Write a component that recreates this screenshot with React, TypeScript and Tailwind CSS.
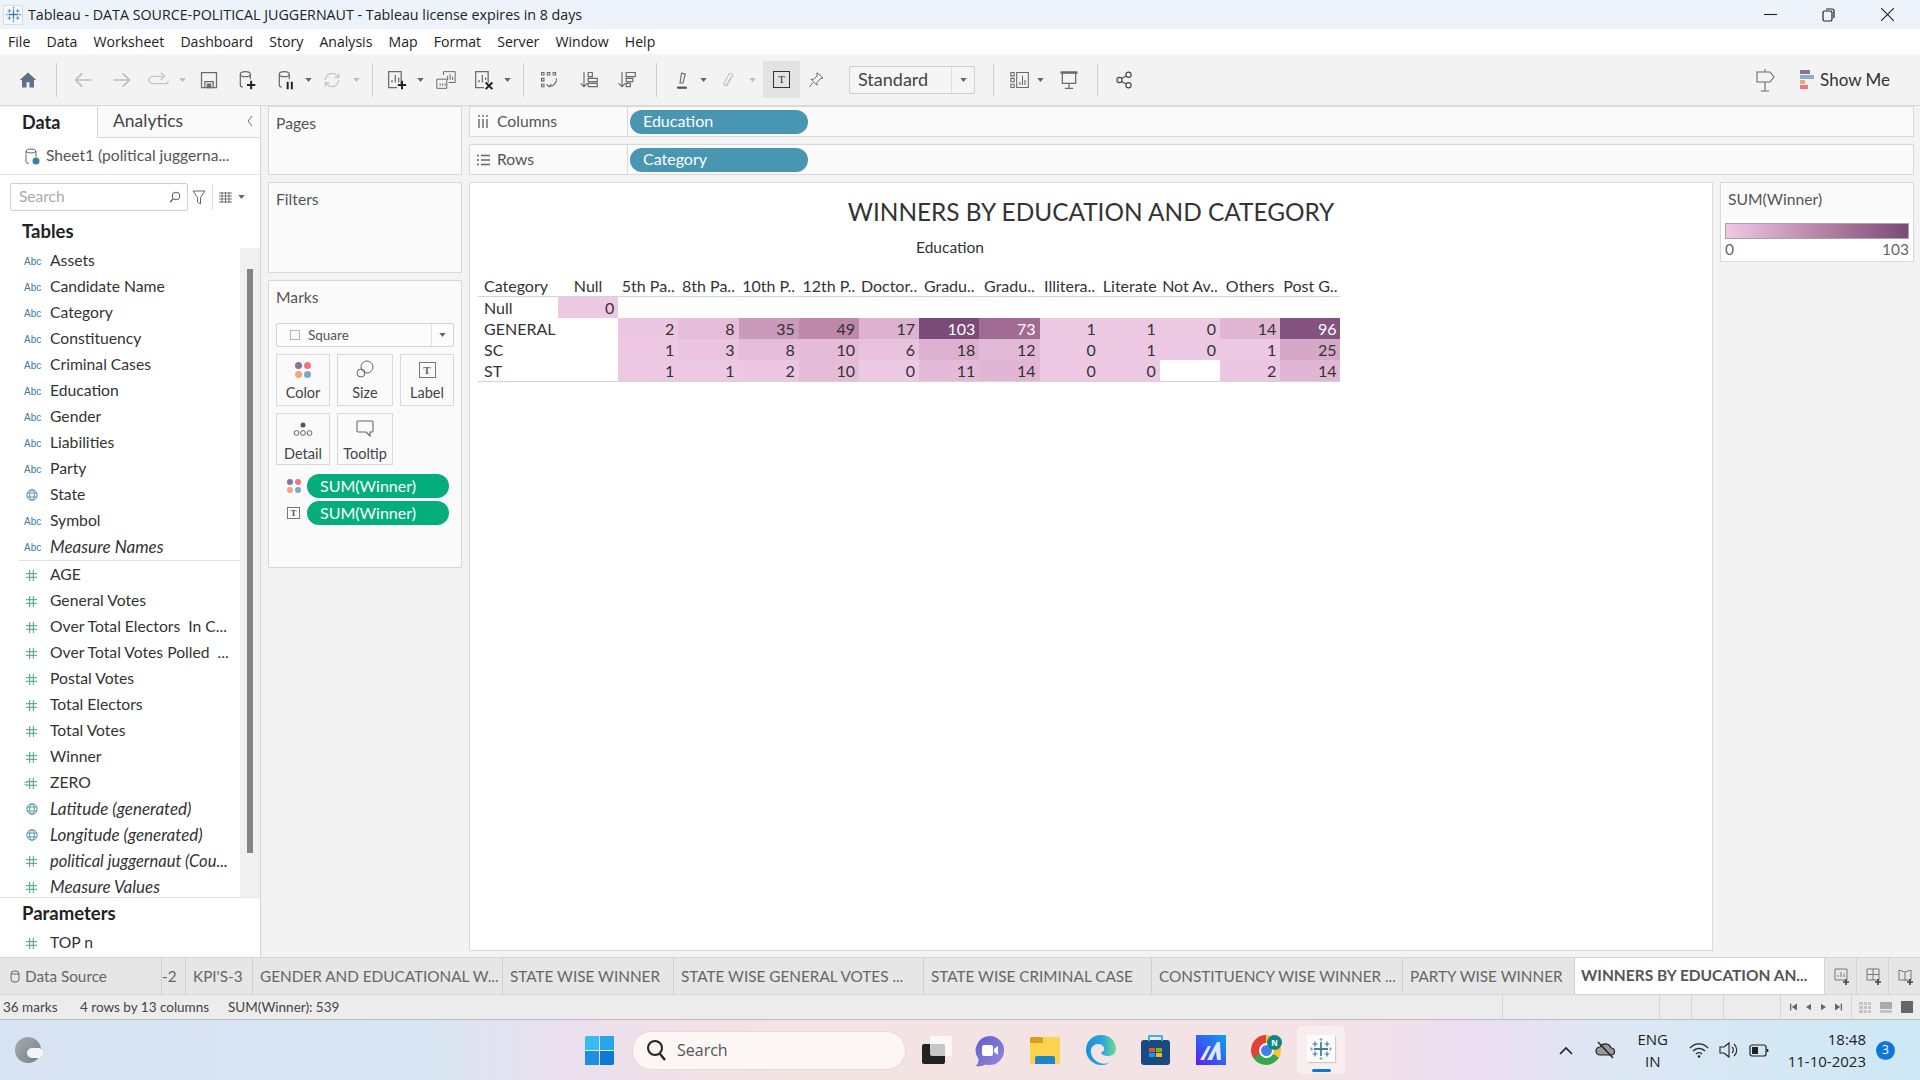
import type { ReactNode } from 'react';

// Tableau Desktop, feuille "WINNERS BY EDUCATION AND CATEGORY", avec la barre des tâches Windows 11.

const dims = ['Assets', 'Candidate Name', 'Category', 'Constituency', 'Criminal Cases', 'Education', 'Gender', 'Liabilities', 'Party', 'State', 'Symbol', 'Measure Names'];
const measures = ['AGE', 'General Votes', 'Over Total Electors  In C...', 'Over Total Votes Polled  ...', 'Postal Votes', 'Total Electors', 'Total Votes', 'Winner', 'ZERO', 'Latitude (generated)', 'Longitude (generated)', 'political juggernaut (Cou...', 'Measure Values'];
const italics = ['Measure Names', 'Latitude (generated)', 'Longitude (generated)', 'Measure Values'];
const columns = ['Null', '5th Pa..', '8th Pa..', '10th P..', '12th P..', 'Doctor..', 'Gradu..', 'Gradu..', 'Illitera..', 'Literate', 'Not Av..', 'Others', 'Post G..'];
const rows: { name: string; values: (number | null)[] }[] = [
  { name: 'Null', values: [0, null, null, null, null, null, null, null, null, null, null, null, null] },
  { name: 'GENERAL', values: [null, 2, 8, 35, 49, 17, 103, 73, 1, 1, 0, 14, 96] },
  { name: 'SC', values: [null, 1, 3, 8, 10, 6, 18, 12, 0, 1, 0, 1, 25] },
  { name: 'ST', values: [null, 1, 1, 2, 10, 0, 11, 14, 0, 0, null, 2, 14] },
];
const tabs = [
  { label: '-2', w: 'w-[24px]', pad: 'pl-0' },
  { label: "KPI'S-3", w: 'w-[67px]', pad: 'pl-[7px]' },
  { label: 'GENDER AND EDUCATIONAL W...', w: 'w-[250px]', pad: 'pl-[7px]' },
  { label: 'STATE WISE WINNER', w: 'w-[171px]', pad: 'pl-[7px]' },
  { label: 'STATE WISE GENERAL VOTES ...', w: 'w-[250px]', pad: 'pl-[7px]' },
  { label: 'STATE WISE CRIMINAL CASE', w: 'w-[228px]', pad: 'pl-[7px]' },
  { label: 'CONSTITUENCY WISE WINNER ...', w: 'w-[251px]', pad: 'pl-[7px]' },
  { label: 'PARTY WISE WINNER', w: 'w-[172px]', pad: 'pl-[7px]' },
];

// 0 -> #eec9e4, 51 -> #bb85a8, 103 -> #7a4a78
function heat(v: number) {
  const a = [238, 201, 228];
  const b = [187, 133, 168];
  const c = [122, 74, 120];
  const t = v <= 51 ? v / 51 : (v - 51) / 52;
  const from = v <= 51 ? a : b;
  const to = v <= 51 ? b : c;
  return `rgb(${from.map((f, i) => Math.round(f + (to[i] - f) * t)).join(',')})`;
}

function Ico({ className, children, vb = '0 0 24 24' }: { className: string; children: ReactNode; vb?: string }) {
  return (
    <svg viewBox={vb} fill="none" stroke="currentColor" strokeWidth="1.5" className={`shrink-0 ${className}`}>
      {children}
    </svg>
  );
}

const Caret = ({ ml, light }: { ml: string; light?: boolean }) => (
  <svg viewBox="0 0 8 5" className={`w-[7px] h-[4px] shrink-0 ${ml} ${light ? 'text-[#bdbdbd]' : 'text-[#666]'}`}>
    <path d="M0 0h8L4 5z" fill="currentColor" />
  </svg>
);

const Sep = ({ ml }: { ml: string }) => <div className={`w-px h-[34px] bg-[#cfcfcf] shrink-0 ${ml}`} />;

function TableauMark({ className }: { className: string }) {
  return (
    <svg viewBox="0 0 24 24" className={className} stroke="#3f7fa6" strokeWidth="1.2">
      <path d="M12 5v14M5 12h14" strokeWidth="1.8" />
      <path d="M12 1v3M10.5 2.5h3M12 20v3M10.5 21.5h3M1 12h3M2.5 10.5v3M20 12h3M21.5 10.5v3" stroke="#7fa6c4" />
      <path d="M6 4.5v5M3.5 7h5M18 4.5v5M15.5 7h5M6 14.5v5M3.5 17h5M18 14.5v5M15.5 17h5" />
    </svg>
  );
}

function FieldIcon({ kind }: { kind: 'abc' | 'geo' | 'num' | 'calc' }) {
  if (kind === 'abc') return <span className="w-[32px] pl-[6px] text-[10px] text-[#3e7c9b] font-['Liberation_Sans',sans-serif] shrink-0">Abc</span>;
  if (kind === 'geo') {
    return (
      <span className="w-[32px] pl-[8px] shrink-0 text-[#3f8fa0]">
        <Ico className="w-[12px] h-[12px]" vb="0 0 12 12">
          <g strokeWidth="0.9">
            <circle cx="6" cy="6" r="5.2" />
            <ellipse cx="6" cy="6" rx="2.3" ry="5.2" />
            <path d="M1 4h10M1 8h10" />
          </g>
        </Ico>
      </span>
    );
  }
  return (
    <span className="w-[32px] pl-[8px] shrink-0 relative text-[#46a07c]">
      {kind === 'calc' && <span className="absolute left-[5px] top-[-2px] text-[9px] leading-[16px]">=</span>}
      <Ico className="w-[11px] h-[11px]" vb="0 0 11 11">
        <path d="M3.7 0v11M7.3 0v11M0 3.7h11M0 7.3h11" strokeWidth="1" />
      </Ico>
    </span>
  );
}

function Field({ name, kind }: { name: string; kind: 'abc' | 'geo' | 'num' | 'calc' }) {
  const wide = name.startsWith('political');
  return (
    <div className="h-[26px] flex items-center pl-[18px] whitespace-pre">
      <FieldIcon kind={kind} />
      <span className={wide ? 'italic text-[16.5px]' : italics.includes(name) ? 'italic text-[17px]' : ''}>{name}</span>
    </div>
  );
}

function Toolbar() {
  return (
    <div className="h-[51px] bg-[#f3f3f3] flex items-center text-[#6b6b6b] shrink-0">
      <Ico className="w-[18px] h-[18px] ml-[19px] text-[#5f7289]">
        <path d="M12 2 1 12h3v10h6v-7h4v7h6V12h3z" fill="currentColor" stroke="none" />
      </Ico>
      <Sep ml="ml-[19px]" />
      <Ico className="w-[20px] h-[20px] ml-[16px] text-[#bdbdbd]"><path d="M22 12H3M11 4l-8 8 8 8" strokeWidth="2" /></Ico>
      <Ico className="w-[20px] h-[20px] ml-[19px] text-[#bdbdbd]"><path d="M2 12h19M13 4l8 8-8 8" strokeWidth="2" /></Ico>
      <Ico className="w-[22px] h-[22px] ml-[16px] text-[#c4c4c4]"><path d="M16 8H5a3 3 0 0 0 0 8h14a3 3 0 0 0 3-3M14 4l4 4-4 4" /></Ico>
      <Caret ml="ml-[9px]" light />
      <Ico className="w-[20px] h-[20px] ml-[13px]"><path d="M3 3h18v18H3zM7 21v-7h10v7" /><path d="M10 17h4v4h-4z" fill="currentColor" /></Ico>
      <Ico className="w-[20px] h-[20px] ml-[18px]">
        <ellipse cx="10" cy="5" rx="6" ry="3" />
        <path d="M4 5v13a2 2 0 0 0 3 2M16 5v6" />
        <path d="M17 13v10M12 18h10" stroke="#222" strokeWidth="2.4" />
      </Ico>
      <Ico className="w-[20px] h-[20px] ml-[19px]">
        <ellipse cx="10" cy="5" rx="6" ry="3" />
        <path d="M4 5v13a2 2 0 0 0 3 2M16 5v6" />
        <path d="M14 14v9M19 14v9" stroke="#222" strokeWidth="2.4" />
      </Ico>
      <Caret ml="ml-[9px]" />
      <Ico className="w-[20px] h-[20px] ml-[10px] text-[#c4c4c4]"><path d="M4 12a8 8 0 0 1 14-5l2 2M20 12a8 8 0 0 1-14 5l-2-2M20 4v5h-5M4 20v-5h5" /></Ico>
      <Caret ml="ml-[11px]" light />
      <Sep ml="ml-[12px]" />
      <Ico className="w-[20px] h-[20px] ml-[14px]">
        <path d="M17 18V2H2v19h10M6 15v-3M10 15V6M14 15v-6" />
        <path d="M18 13v10M13 18h10" stroke="#222" strokeWidth="2.4" />
      </Ico>
      <Caret ml="ml-[10px]" />
      <Ico className="w-[20px] h-[20px] ml-[12px]">
        <path d="M9 6V2h14v13h-8M1 11h12v11H1zM5 19v-3M8 19v-3M11 19v-3M14 12V7M17 12V5M20 12V8" strokeWidth="1.2" />
      </Ico>
      <Ico className="w-[20px] h-[20px] ml-[18px]">
        <path d="M17 15V2H2v19h10M6 15v-3M10 15V6M14 12V9" />
        <path d="m14 15 8 8M22 15l-8 8" stroke="#222" strokeWidth="2.4" />
      </Ico>
      <Caret ml="ml-[10px]" />
      <Sep ml="ml-[12px]" />
      <Ico className="w-[20px] h-[20px] ml-[15px]">
        <path d="M3 3h3v3H3zM10 3h3v3h-3zM17 3h3v3h-3zM3 10h3v3H3zM3 17h3v3H3zM21 10a9 9 0 0 1-9 10M9 17l3 3 3-3" strokeWidth="1.3" />
      </Ico>
      <Ico className="w-[20px] h-[20px] ml-[20px]">
        <path d="M6 2v18M2 16l4 4 4-4M11 3h5v5h-5zM11 10h11v4H11zM11 16h11v4H11z" strokeWidth="1.4" />
      </Ico>
      <Ico className="w-[20px] h-[20px] ml-[18px]">
        <path d="M6 2v18M2 16l4 4 4-4M11 3h11v5H11zM11 10h8v4h-8zM11 16h5v4h-5z" strokeWidth="1.4" />
      </Ico>
      <Sep ml="ml-[19px]" />
      <Ico className="w-[18px] h-[18px] ml-[17px]">
        <path d="m8 16 2-13 5 1-3 12zM5 23h12" />
        <path d="M4 22h13" stroke="#555" strokeWidth="2.5" />
      </Ico>
      <Caret ml="ml-[8px]" />
      <Ico className="w-[18px] h-[18px] ml-[13px] text-[#c4c4c4]"><path d="m9 20 8-14a3 3 0 0 0-5-2L5 17a2 2 0 0 0 3 2l7-11" /></Ico>
      <Caret ml="ml-[11px]" light />
      <div className="w-[37px] h-[37px] ml-[7px] bg-[#e3e3e3] flex items-center justify-center shrink-0">
        <div className="w-[17px] h-[17px] border border-[#333] flex items-center justify-center text-[11px] leading-none text-[#333] font-['Liberation_Serif',serif]">T</div>
      </div>
      <Ico className="w-[16px] h-[16px] ml-[9px]"><path d="m13 1 9 8-4 1-5 6 0 4-9-9 4 0 5-5zM7 16l-6 7" transform="translate(-1 0)" /></Ico>
      <div className="ml-[24px] w-[126px] h-[28px] shrink-0 flex border border-[#cfcfcf] rounded-[2px] bg-[#f5f5f5] font-[Lato,sans-serif] text-[18px] text-[#444]">
        <div className="flex-1 flex items-center pl-[8px] border-r border-[#dedede]">Standard</div>
        <div className="w-[22px] flex items-center justify-center"><Caret ml="" /></div>
      </div>
      <Sep ml="ml-[18px]" />
      <Ico className="w-[20px] h-[20px] ml-[16px]">
        <path d="M1 3h4v4H1zM1 10h4v4H1zM1 17h4v4H1zM8 3h14v18H8zM12 18v-4M15 18V7M18 18v-6" strokeWidth="1.3" />
      </Ico>
      <Caret ml="ml-[7px]" />
      <Ico className="w-[20px] h-[20px] ml-[15px]">
        <path d="M2 3h20M4 3v13h16V3M12 16v6M7 22h10" />
        <path d="M2 3h20" strokeWidth="3" />
      </Ico>
      <Sep ml="ml-[18px]" />
      <Ico className="w-[18px] h-[18px] ml-[17px] text-[#444]">
        <circle cx="6" cy="12" r="3.5" />
        <circle cx="18" cy="5" r="3.5" />
        <circle cx="18" cy="19" r="3.5" />
        <path d="m9 10 6-3.5M9 14l6 3.5" />
      </Ico>
      <div className="ml-auto flex items-center pr-[30px]">
        <Ico className="w-[20px] h-[24px]" vb="0 0 20 24">
          <path d="M10 1v3M2 4h13l4 5-4 5H2zM10 14v9M6 23h8" strokeWidth="1.1" />
        </Ico>
        <div className="ml-[25px] w-[14px] flex flex-col gap-px">
          <div className="h-[4px] w-[10px] bg-[#8a7299]" />
          <div className="h-[4px] w-[14px] bg-[#8aaccf]" />
          <div className="h-[4px] w-[5px] bg-[#f0a878]" />
          <div className="h-[4px] w-[8px] bg-[#f2747f]" />
        </div>
        <span className="ml-[6px] text-[17px] text-[#333] font-[Lato,sans-serif]">Show Me</span>
      </div>
    </div>
  );
}

function LeftPanel() {
  return (
    <div className="w-[261px] shrink-0 bg-white border-r border-[#d4d4d4] flex flex-col font-[Lato,sans-serif] text-[15.7px] text-[#333] overflow-hidden">
      <div className="h-[32px] flex shrink-0">
        <div className="w-[98px] flex items-center pl-[22px] font-bold text-[18px] text-[#222] border-r border-[#d4d4d4] border-t border-t-[#f0f0f0]">Data</div>
        <div className="flex-1 flex items-center pl-[15px] text-[17.5px] text-[#444] bg-[#fafafa] border-b border-[#d4d4d4] relative">
          Analytics
          <svg viewBox="0 0 6 10" className="absolute right-[7px] top-[10px] w-[6px] h-[10px] text-[#666]" fill="none" stroke="currentColor"><path d="M5 0 1 5l4 5" /></svg>
        </div>
      </div>
      <div className="h-[37px] flex items-center pl-[25px] border-b border-[#e6e6e6] text-[15.6px] text-[#555] shrink-0">
        <Ico className="w-[15px] h-[17px] mr-[6px] text-[#666]" vb="0 0 15 17">
          <ellipse cx="6" cy="3" rx="5" ry="2" strokeWidth="1" />
          <path d="M1 3v11a2 2 0 0 0 3 1M11 3v6" strokeWidth="1" />
          <circle cx="11" cy="13" r="3.5" fill="#3e7fa8" stroke="none" />
        </Ico>
        Sheet1 (political juggerna...
      </div>
      <div className="h-[40px] flex items-start pt-[8px] pl-[10px] shrink-0">
        <div className="w-[178px] h-[28px] border border-[#cfcfcf] rounded-[2px] flex items-center pl-[8px] pr-[6px] text-[#aaa] text-[15.5px]">
          <span className="flex-1">Search</span>
          <Ico className="w-[12px] h-[12px] text-[#555]" vb="0 0 12 12"><circle cx="7" cy="5" r="3.8" strokeWidth="1" /><path d="m4 8-3 3" strokeWidth="1.2" /></Ico>
        </div>
        <Ico className="w-[14px] h-[15px] ml-[4px] mt-[7px] text-[#666]" vb="0 0 14 15"><path d="M1 1h12L8.5 7.5V14l-3-2V7.500z" strokeWidth="1" /></Ico>
        <div className="w-px h-[26px] bg-[#ddd] ml-[6px] mt-[1px]" />
        <Ico className="w-[13px] h-[11px] ml-[6px] mt-[9px] text-[#666]" vb="0 0 13 11"><path d="M0 1h13M0 4h13M0 7h13M0 10h13M3 0v11M6.500 0v11M10 0v11" strokeWidth="0.9" /></Ico>
        <Caret ml="ml-[6px] mt-[12px]" />
      </div>
      <div className="h-[33px] flex items-center pl-[22px] font-bold text-[18.5px] text-[#222] shrink-0">Tables</div>
      <div className="h-[649px] flex overflow-hidden shrink-0">
        <div className="flex-1 min-w-0">
          <div className="border-b border-[#e2e2e2] ml-[18px] mb-px">
            <div className="-ml-[18px]">
              {dims.map((d) => (
                <Field key={d} name={d} kind={d === 'State' ? 'geo' : 'abc'} />
              ))}
            </div>
          </div>
          {measures.map((m) => (
            <Field key={m} name={m} kind={m.includes('generated') ? 'geo' : m === 'ZERO' ? 'calc' : 'num'} />
          ))}
        </div>
        <div className="w-[20px] bg-[#f0f0f0] shrink-0 pl-[7px] pt-[21px]">
          <div className="w-[6px] h-[584px] bg-[#858585]" />
        </div>
      </div>
      <div className="border-t border-[#e6e6e6] h-[33px] flex items-center pl-[22px] font-bold text-[18.5px] text-[#222] shrink-0">Parameters</div>
      <Field name="TOP n" kind="num" />
    </div>
  );
}

function MarkButton({ label, w, tight, children }: { label: string; w: string; tight?: boolean; children: ReactNode }) {
  return (
    <div className={`${w} h-[52px] border border-[#d9d9d9] flex flex-col items-center justify-end text-[#444] text-[14.5px] ${tight ? 'pb-[2px] gap-[9px]' : 'pb-[4px] gap-[7px]'}`}>
      {children}
      <span className="leading-[16px]">{label}</span>
    </div>
  );
}

const ColorDots = ({ size }: { size: string }) => (
  <div className={`${size} grid grid-cols-2 gap-[2px] shrink-0`}>
    <div className="rounded-full bg-[#8a7299]" />
    <div className="rounded-full bg-[#f2747f]" />
    <div className="rounded-full bg-[#f0a878]" />
    <div className="rounded-full bg-[#7fa6cc]" />
  </div>
);

function MarkPill({ children }: { children: ReactNode }) {
  return (
    <div className="flex items-center h-[24px] pl-[18px] shrink-0">
      <div className="w-[20px] flex justify-start shrink-0">{children}</div>
      <div className="w-[142px] h-[24px] rounded-full bg-[#03ae7c] text-white text-[16px] flex items-center pl-[13px]">SUM(Winner)</div>
    </div>
  );
}

function MiddlePanel() {
  return (
    <div className="w-[194px] ml-[7px] shrink-0 flex flex-col gap-[7px] font-[Lato,sans-serif] text-[#555]">
      <div className="h-[69px] bg-[#fafafa] border border-[#d9d9d9] pl-[7px] pt-[5px] text-[15.7px]">Pages</div>
      <div className="h-[91px] bg-[#fafafa] border border-[#d9d9d9] pl-[7px] pt-[5px] text-[15.7px]">Filters</div>
      <div className="h-[288px] bg-[#fafafa] border border-[#d9d9d9] pt-[5px] text-[15.7px]">
        <div className="pl-[7px] h-[37px]">Marks</div>
        <div className="ml-[7px] w-[178px] h-[24px] border border-[#d4d4d4] rounded-[2px] flex items-center text-[13.5px] bg-[#fcfcfc]">
          <div className="w-[10px] h-[10px] border border-[#b5b5b5] ml-[13px] mr-[8px]" />
          <span className="flex-1">Square</span>
          <div className="w-[22px] h-full border-l border-[#e2e2e2] flex items-center justify-center"><Caret ml="" /></div>
        </div>
        <div className="flex gap-[7px] ml-[7px] mt-[7px]">
          <MarkButton label="Color" w="w-[54px]"><ColorDots size="w-[16px] h-[16px]" /></MarkButton>
          <MarkButton label="Size" w="w-[56px]">
            <Ico className="w-[18px] h-[18px] text-[#666]" vb="0 0 18 18"><circle cx="11" cy="7" r="6" strokeWidth="1" /><circle cx="5" cy="13" r="4" strokeWidth="1" /></Ico>
          </MarkButton>
          <MarkButton label="Label" w="w-[54px]">
            <div className="w-[17px] h-[16px] border border-[#777] flex items-center justify-center text-[11px] leading-none font-bold font-['Liberation_Serif',serif] text-[#666]">T</div>
          </MarkButton>
        </div>
        <div className="flex gap-[7px] ml-[7px] mt-[7px]">
          <MarkButton label="Detail" w="w-[54px]" tight>
            <Ico className="w-[20px] h-[15px] text-[#666]" vb="0 0 20 15">
              <circle cx="10" cy="3" r="2.500" fill="#555" stroke="none" />
              <circle cx="3.500" cy="11" r="2.400" strokeWidth="1" />
              <circle cx="10" cy="11" r="2.400" strokeWidth="1" />
              <circle cx="16.500" cy="11" r="2.400" strokeWidth="1" />
            </Ico>
          </MarkButton>
          <MarkButton label="Tooltip" w="w-[56px]" tight>
            <Ico className="w-[18px] h-[17px] text-[#666]" vb="0 0 18 17"><path d="M2 1h14a1 1 0 0 1 1 1v9a1 1 0 0 1-1 1h-2v4l-4-4H2a1 1 0 0 1-1-1V2a1 1 0 0 1 1-1z" strokeWidth="1.1" /></Ico>
          </MarkButton>
        </div>
        <div className="mt-[9px] flex flex-col gap-[3px]">
          <MarkPill><ColorDots size="w-[14px] h-[14px]" /></MarkPill>
          <MarkPill>
            <div className="w-[13px] h-[12px] border border-[#777] flex items-center justify-center text-[9px] leading-none font-['Liberation_Serif',serif] font-bold">T</div>
          </MarkPill>
        </div>
      </div>
    </div>
  );
}

function Shelf({ label, icon, pill }: { label: string; icon: ReactNode; pill: string }) {
  return (
    <div className="h-[31px] bg-[#fafafa] border border-[#d9d9d9] flex items-center">
      <div className="w-[158px] h-full border-r border-[#d9d9d9] flex items-center pl-[7px] shrink-0 text-[15.7px] text-[#555]">
        <div className="w-[14px] mr-[6px] flex items-center">{icon}</div>
        {label}
      </div>
      <div className="ml-[2px] w-[178px] h-[24px] rounded-full bg-[#4996b2] text-white text-[16px] flex items-center pl-[13px] pb-px">{pill}</div>
    </div>
  );
}

function Viz() {
  return (
    <div className="h-[769px] bg-white border border-[#d9d9d9] pt-[14px] font-[Lato,sans-serif] text-[#333] text-[16px]">
      <div className="text-center text-[24.4px] leading-[30px] text-[#333]">WINNERS BY EDUCATION AND CATEGORY</div>
      <div className="mt-[8px] h-[24px] leading-[24px] w-[960px] text-center text-[15.5px]">Education</div>
      <div className="mt-[17px] ml-[8px] w-[862px]">
        <div className="grid grid-cols-[80px_repeat(13,60.2px)] h-[20px] border-b border-[#d4d4d4] box-content leading-[20px] whitespace-nowrap">
          <div className="pl-[6px]">Category</div>
          {columns.map((c, i) => (
            <div key={i} className="text-center">{c}</div>
          ))}
        </div>
        <div className="border-b border-[#d4d4d4]">
          {rows.map((r) => (
            <div key={r.name} className="grid grid-cols-[80px_repeat(13,60.2px)] h-[21px] leading-[21px]">
              <div className="pl-[6px]">{r.name}</div>
              {r.values.map((v, i) =>
                v === null ? (
                  <div key={i} />
                ) : (
                  <div key={i} className={`text-right pr-[4px] ${v > 60 ? 'text-white' : ''}`} style={{ backgroundColor: heat(v) }}>
                    {v}
                  </div>
                ),
              )}
            </div>
          ))}
        </div>
      </div>
    </div>
  );
}

function Legend() {
  return (
    <div className="w-[194px] ml-[7px] shrink-0 h-[80px] bg-[#fafafa] border border-[#d9d9d9] font-[Lato,sans-serif] text-[#555] self-start">
      <div className="h-[36px] pl-[7px] leading-[32px] text-[15.7px]">SUM(Winner)</div>
      <div className="bg-white h-[42px] px-[4px] pt-[4px]">
        <div className="h-[16px] border border-[#aaa3a3] bg-[linear-gradient(90deg,#eec9e4,#bb85a8_50%,#7a4a78)]" />
        <div className="flex justify-between text-[15.5px] text-[#666] leading-[20px]"><span>0</span><span>103</span></div>
      </div>
    </div>
  );
}

function TabBar() {
  return (
    <div className="h-[38px] bg-[#e6e6e6] border-y border-[#d4d4d4] flex text-[#666] font-[Lato,sans-serif] text-[15.3px] whitespace-nowrap shrink-0">
      <div className="w-[162px] flex items-center pl-[10px] border-r border-[#cfcfcf] shrink-0">
        <Ico className="w-[10px] h-[13px] mr-[5px]" vb="0 0 10 13"><rect x="1" y="1" width="8" height="11" rx="3" strokeWidth="1" /><path d="M1 4h8" strokeWidth="1" /></Ico>
        Data Source
      </div>
      {tabs.map((t) => (
        <div key={t.label} className={`${t.w} ${t.pad} flex items-center border-r border-[#cfcfcf] overflow-hidden shrink-0`}>{t.label}</div>
      ))}
      <div className="w-[249px] bg-white flex items-center pl-[6px] font-bold text-[15.5px] text-[#555] shrink-0">WINNERS BY EDUCATION AN...</div>
      {['M3 2h12v11H3zM6 10V8M9 10V5M12 10V7', 'M3 2h12v11H3zM9 2v11M3 7.500h12', 'M3 3l6 2 6-2v10H3zM9 5v9'].map((d) => (
        <div key={d} className="w-[32px] flex items-center justify-center border-l border-[#d4d4d4] text-[#777] shrink-0">
          <Ico className="w-[18px] h-[18px]" vb="0 0 18 18">
            <path d={d} strokeWidth="1" />
            <path d="M14 12v6M11 15h6" stroke="#444" strokeWidth="1.6" />
          </Ico>
        </div>
      ))}
    </div>
  );
}

function StatusBar() {
  return (
    <div className="h-[25px] bg-[#ececec] border-b border-[#bdbdbd] flex items-center text-[#444] font-[Lato,sans-serif] text-[13.5px] shrink-0">
      <span className="pl-[3px] w-[80px]">36 marks</span>
      <span className="w-[148px]">4 rows by 13 columns</span>
      <span>SUM(Winner): 539</span>
      <div className="ml-auto w-[418px] h-full flex shrink-0">
        <div className="w-[157px] border-l border-[#d4d4d4]" />
        <div className="w-[32px] border-l border-[#d4d4d4]" />
        <div className="w-[32px] border-l border-[#d4d4d4]" />
        <div className="w-[57px] border-l border-[#d4d4d4]" />
        <div className="w-[71px] border-l border-[#d4d4d4] flex items-center justify-around px-[4px] text-[#666]">
          <svg viewBox="0 0 8 8" className="w-[7px] h-[8px]"><path d="M0 0h1.500v8H0zM8 0v8L2 4z" fill="currentColor" /></svg>
          <svg viewBox="0 0 6 8" className="w-[5px] h-[8px]"><path d="M6 0v8L0 4z" fill="currentColor" /></svg>
          <svg viewBox="0 0 6 8" className="w-[5px] h-[8px]"><path d="M0 0v8l6-4z" fill="currentColor" /></svg>
          <svg viewBox="0 0 8 8" className="w-[7px] h-[8px]"><path d="M8 0H6.500v8H8zM0 0v8l6-4z" fill="currentColor" /></svg>
        </div>
        <div className="flex-1 border-l border-[#d4d4d4] flex items-center justify-around px-[3px]">
          <div className="w-[12px] h-[11px] grid grid-cols-3 gap-px">
            {Array.from({ length: 9 }).map((_, i) => <div key={i} className="bg-[#c4c4c4]" />)}
          </div>
          <div className="w-[12px] h-[11px] flex flex-col gap-px">
            <div className="h-[7px] bg-[#aaa]" />
            <div className="h-[3px] bg-[#c4c4c4]" />
          </div>
          <div className="w-[12px] h-[12px] bg-[#666]" />
        </div>
      </div>
    </div>
  );
}

function Taskbar() {
  return (
    <div className="h-[60px] flex items-center bg-[linear-gradient(90deg,#d7e3f2_0%,#d9e6f3_22%,#ecdfee_30%,#f4e3e3_40%,#f4e3e4_68%,#ecdef0_76%,#dde7f4_84%,#cde8f5_100%)] font-['Open_Sans',sans-serif] text-[#222]">
      <div className="w-[26px] h-[26px] ml-[15px] rounded-full bg-[linear-gradient(135deg,#a7adb5,#777d84)] relative shrink-0">
        <div className="absolute left-[12px] top-[11px] w-[16px] h-[10px] rounded-full bg-[#f4f4f4]" />
      </div>
      <div className="ml-[544px] w-[29px] h-[29px] grid grid-cols-2 gap-[1px] shrink-0">
        <div className="bg-[#35bdf3] rounded-tl-[2px]" />
        <div className="bg-[#27a6ec]" />
        <div className="bg-[#1d90e2]" />
        <div className="bg-[#0f78d4] rounded-br-[2px]" />
      </div>
      <div className="ml-[18px] w-[274px] h-[39px] rounded-full bg-[#fcf6f5] border border-[#e8d8d6] flex items-center pl-[13px] text-[16px] text-[#555] shrink-0">
        <Ico className="w-[21px] h-[23px] mr-[10px] text-[#222]" vb="0 0 21 23"><circle cx="9" cy="9" r="7" strokeWidth="2" /><path d="m14 15 5 6" strokeWidth="2.4" /></Ico>
        Search
      </div>
      {/* Vue des tâches */}
      <div className="ml-[16px] w-[30px] h-[28px] relative shrink-0">
        <div className="absolute left-0 bottom-0 w-[23px] h-[20px] bg-[#222] rounded-[2px]" />
        <div className="absolute right-0 top-0 w-[22px] h-[20px] bg-white/75 rounded-[2px]" />
      </div>
      <svg viewBox="0 0 29 31" className="ml-[23px] w-[29px] h-[31px] mt-[2px] shrink-0">
        <defs>
          <linearGradient id="chat" x1="0" y1="0" x2="1" y2="1">
            <stop offset="0" stopColor="#5b62c9" />
            <stop offset="1" stopColor="#9a86dc" />
          </linearGradient>
        </defs>
        <path d="M14.500 0a14.500 14.500 0 1 1-4 28.400Q6 31 1 30q3-3 2.500-7A14.500 14.500 0 0 1 14.500 0z" fill="url(#chat)" />
        <rect x="7" y="9" width="11" height="11" rx="2" fill="#fff" />
        <path d="m19 13 4-3v9l-4-3z" fill="#fff" />
      </svg>
      {/* Explorateur */}
      <div className="ml-[26px] w-[30px] h-[27px] bg-[#fbd34f] rounded-[2px] relative shrink-0">
        <div className="absolute left-0 top-0 w-[13px] h-[6px] bg-[#d99f18] rounded-t-[2px]" />
        <div className="absolute left-[5px] bottom-0 w-[20px] h-[8px] bg-[#1d86c8] rounded-t-[2px]" />
      </div>
      {/* Edge */}
      <svg viewBox="0 0 30 30" className="ml-[26px] w-[30px] h-[30px] shrink-0">
        <defs>
          <linearGradient id="edge" x1="0" y1="0" x2="1" y2="0">
            <stop offset="0" stopColor="#1a8fdc" />
            <stop offset="0.55" stopColor="#2aa7d8" />
            <stop offset="1" stopColor="#6fdc8c" />
          </linearGradient>
        </defs>
        <path d="M15 0c9 0 15 6 15 14 0 4-3 7-8 7-3 0-6-1-7-3 0-1 2-1 3-3 1-3-2-6-6-6-3 0-6 2-7 5-1 6 3 12 9 14 3 1 7 1 10-1-3 3-6 3-9 3C7 30 0 23 0 15 0 6 7 0 15 0z" fill="url(#edge)" />
      </svg>
      {/* Store */}
      <div className="ml-[25px] w-[29px] h-[25px] mt-[5px] bg-[#1b4a82] rounded-[3px] relative grid grid-cols-2 gap-px p-[8px] shrink-0">
        <div className="absolute left-[7px] top-[-5px] w-[15px] h-[6px] border-2 border-b-0 border-[#35b6e8] rounded-t-[2px]" />
        <div className="bg-[#f05030]" />
        <div className="bg-[#7fb900]" />
        <div className="bg-[#00a3ee]" />
        <div className="bg-[#ffb800]" />
      </div>
      {/* Appli MA */}
      <svg viewBox="0 0 30 30" className="ml-[26px] w-[30px] h-[30px] shrink-0">
        <defs>
          <linearGradient id="ma" x1="0" y1="1" x2="1" y2="0">
            <stop offset="0" stopColor="#5a1ef0" />
            <stop offset="1" stopColor="#0aa5f5" />
          </linearGradient>
        </defs>
        <rect width="30" height="30" fill="url(#ma)" />
        <path d="m4 25 8-14h3L8 25zM11 25l10-18h3l1 18h-4l-1-9-4 9z" fill="#dfe7fb" />
      </svg>
      {/* Chrome */}
      <div className="ml-[25px] w-[30px] h-[30px] relative shrink-0">
        <div className="w-[30px] h-[30px] rounded-full bg-[conic-gradient(#fbc62d_0_120deg,#37a54a_120deg_240deg,#e34133_240deg_360deg)] flex items-center justify-center">
          <div className="w-[15px] h-[15px] rounded-full bg-[#3f80ea] border-2 border-white" />
        </div>
        <div className="absolute right-[-1px] top-0 w-[15px] h-[15px] rounded-full bg-[#16857f] text-white text-[8px] font-bold flex items-center justify-center">N</div>
      </div>
      {/* Tableau actif */}
      <div className="ml-[16px] w-[48px] h-[48px] rounded-[5px] bg-[#f8eeef] flex flex-col items-center pt-[9px] relative shrink-0">
        <div className="w-[28px] h-[27px] bg-[#fbfbfb] shadow-[1px_1px_1px_#ccc] flex items-center justify-center"><TableauMark className="w-[24px] h-[24px]" /></div>
        <div className="absolute bottom-[2px] w-[19px] h-[3px] rounded-full bg-[#0f78d4]" />
      </div>
      {/* Zone de notification */}
      <div className="ml-auto flex items-center pr-[25px] text-[15px] shrink-0">
        <Ico className="w-[14px] h-[9px]" vb="0 0 14 9"><path d="m1 8 6-6 6 6" strokeWidth="1.6" /></Ico>
        <Ico className="w-[21px] h-[18px] ml-[22px]" vb="0 0 21 18">
          <path d="M5 14a4 4 0 0 1 0-8 6 6 0 0 1 11 1 3.500 3.500 0 0 1 0 7z" fill="#999" strokeWidth="1.2" />
          <path d="m3 1 15 16" strokeWidth="1.4" />
        </Ico>
        <div className="ml-[18px] w-[38px] text-center leading-[22px]">ENG<br />IN</div>
        <Ico className="w-[20px] h-[16px] ml-[17px]" vb="0 0 20 16">
          <path d="M1 6a12 12 0 0 1 18 0M4 9a8 8 0 0 1 12 0M7 12a4 4 0 0 1 6 0" strokeWidth="1.2" />
          <circle cx="10" cy="14.500" r="1.300" fill="currentColor" stroke="none" />
        </Ico>
        <Ico className="w-[20px] h-[18px] ml-[10px]" vb="0 0 20 18">
          <path d="M1 6h4l5-4v14l-5-4H1zM13 6a4 4 0 0 1 0 6M15 3a8 8 0 0 1 0 12" strokeWidth="1.1" />
        </Ico>
        <Ico className="w-[20px] h-[13px] ml-[10px]" vb="0 0 20 13">
          <rect x="1" y="1" width="16" height="11" rx="2" strokeWidth="1.2" />
          <path d="M3 3h6v7H3z" fill="currentColor" stroke="none" />
          <path d="M18.500 5v3" strokeWidth="1.600" />
        </Ico>
        <div className="ml-[19px] text-right leading-[22px]">18:48<br />11-10-2023</div>
        <div className="ml-[10px] w-[19px] h-[19px] rounded-full bg-[#0f78d4] text-white text-[12px] flex items-center justify-center">3</div>
      </div>
    </div>
  );
}

export default function App() {
  return (
    <div className="w-[1920px] h-[1080px] flex flex-col overflow-hidden bg-[#f3f3f3]">
      <div className="h-[29px] bg-[#ecf3fa] flex items-center font-['Open_Sans',sans-serif] text-[14.25px] text-[#222] shrink-0">
        <div className="w-[20px] h-[20px] ml-[3px] mr-[5px] bg-[#f6f8fa] border border-[#d5dce2] flex items-center justify-center">
          <TableauMark className="w-[17px] h-[17px]" />
        </div>
        <span className="whitespace-nowrap">Tableau - DATA SOURCE-POLITICAL JUGGERNAUT - Tableau license expires in 8 days</span>
        <div className="ml-auto flex items-center pr-[26px] text-[#222]">
          <Ico className="w-[13px] h-[13px]" vb="0 0 13 13"><path d="M0 6.500h13" strokeWidth="1.100" /></Ico>
          <Ico className="w-[13px] h-[14px] ml-[45px]" vb="0 0 13 14"><rect x="1" y="3" width="9" height="10" rx="1.500" strokeWidth="1.200" /><path d="M4 1h6a2 2 0 0 1 2 2v7" strokeWidth="1.200" /></Ico>
          <Ico className="w-[13px] h-[13px] ml-[46px]" vb="0 0 13 13"><path d="m0 0 13 13M13 0 0 13" strokeWidth="1.100" /></Ico>
        </div>
      </div>
      <div className="h-[25px] bg-white flex items-center gap-[16.1px] pl-[8px] font-['Open_Sans',sans-serif] text-[14.1px] text-[#222] shrink-0">
        {['File', 'Data', 'Worksheet', 'Dashboard', 'Story', 'Analysis', 'Map', 'Format', 'Server', 'Window', 'Help'].map((m) => (
          <span key={m}>{m}</span>
        ))}
      </div>
      <Toolbar />
      <div className="flex-1 min-h-0 flex bg-[#f3f3f3] border-t border-[#d9d9d9]">
        <LeftPanel />
        <MiddlePanel />
        <div className="flex-1 min-w-0 ml-[7px] mr-[6px] flex flex-col gap-[7px] font-[Lato,sans-serif]">
          <Shelf
            label="Columns"
            pill="Education"
            icon={<Ico className="w-[12px] h-[13px] text-[#666]" vb="0 0 12 13"><path d="M2 4v9M6 4v9M10 4v9M2 0v2M6 0v2M10 0v2" strokeWidth="1.400" /></Ico>}
          />
          <Shelf
            label="Rows"
            pill="Category"
            icon={<Ico className="w-[13px] h-[12px] text-[#666]" vb="0 0 13 12"><path d="M4 1.500h9M4 6h9M4 10.500h9M0 1.500h2M0 6h2M0 10.500h2" strokeWidth="1.400" /></Ico>}
          />
          <div className="flex">
            <div className="flex-1 min-w-0"><Viz /></div>
            <Legend />
          </div>
        </div>
      </div>
      <TabBar />
      <StatusBar />
      <Taskbar />
    </div>
  );
}
